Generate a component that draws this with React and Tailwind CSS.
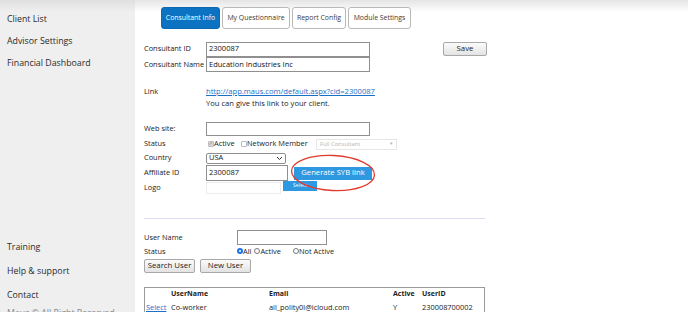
import React from "react";

const font = { fontFamily: '"Open Sans", "Liberation Sans", sans-serif' };

function Tab({ children, active, w }) {
  return (
    <div
      className={
        "h-[22px] flex items-center justify-center rounded-[3px] border text-[6.9px] whitespace-nowrap " +
        w +
        " " +
        (active
          ? "bg-[#0b73c2] border-[#0b6ab3] text-white"
          : "bg-white border-[#b9b9b9] text-[#3a3a3a]")
      }
    >
      {children}
    </div>
  );
}

function Input({ w, h = "h-[15px]", value, light }) {
  return (
    <div
      className={
        "border flex items-center px-[2px] text-[7.5px] text-[#111] bg-white whitespace-nowrap " +
        w +
        " " +
        h +
        " " +
        (light ? "border-[#ececec]" : "border-[#8f8f8f]")
      }
    >
      {value}
    </div>
  );
}

function GrayBtn({ children, w }) {
  return (
    <div
      className={
        "h-[14px] flex items-center justify-center border border-[#a8a8a8] rounded-[2px] bg-gradient-to-b from-[#fbfbfb] to-[#e3e3e3] text-[7.8px] text-[#222] whitespace-nowrap " +
        w
      }
    >
      {children}
    </div>
  );
}

export default function App() {
  return (
    <div className="relative w-[688px] h-[312px] overflow-hidden bg-white flex" style={font}>
      {/* top shadow */}
      <div className="absolute left-0 top-0 w-full h-[12px] bg-gradient-to-b from-[#d9d9d9] to-transparent opacity-70 pointer-events-none" />

      {/* Sidebar */}
      <div className="w-[135px] shrink-0 bg-[#efefef] flex flex-col text-[8.8px] text-[#2b2b2b] pl-[7px] whitespace-nowrap">
        <div className="shrink-0 mt-[9px] h-[22px] flex items-center">Client List</div>
        <div className="shrink-0 h-[22px] flex items-center">Advisor Settings</div>
        <div className="shrink-0 h-[22px] flex items-center">Financial Dashboard</div>
        <div className="shrink-0 mt-[161px] h-[24px] flex items-center">Training</div>
        <div className="shrink-0 h-[24px] flex items-center">Help &amp; support</div>
        <div className="shrink-0 h-[24px] flex items-center">Contact</div>
        <div className="shrink-0 h-[12px] flex items-center text-[#8a8a8a]">Maus © All Right Reserved</div>
      </div>

      {/* Main */}
      <div className="relative flex-1 pl-[9px] text-[7.4px] text-[#222] whitespace-nowrap">
        {/* tabs */}
        <div className="flex gap-[2px] pt-[7px] pl-[17px]">
          <Tab active w="w-[59px]">Consultant Info</Tab>
          <Tab w="w-[68px]">My Questionnaire</Tab>
          <Tab w="w-[54px]">Report Config</Tab>
          <Tab w="w-[63px]">Module Settings</Tab>
        </div>

        {/* form */}
        <div className="mt-[12px] flex flex-col">
          <div className="flex items-center h-[16px]">
            <div className="w-[62px]">Consultant ID</div>
            <Input w="w-[164px]" value="2300087" />
            <div className="ml-[73px]">
              <GrayBtn w="w-[44px]">Save</GrayBtn>
            </div>
          </div>
          <div className="flex items-center h-[15px]">
            <div className="w-[62px]">Consultant Name</div>
            <Input w="w-[164px]" value="Education Industries Inc" />
          </div>

          <div className="mt-[14px] flex items-center h-[12px] text-[7.6px]">
            <div className="w-[62px] text-[7.4px]">Link</div>
            <div className="text-[#1a6fc7] underline">http://app.maus.com/default.aspx?cid=2300087</div>
          </div>
          <div className="flex items-center h-[12px] text-[7.6px]">
            <div className="w-[62px]" />
            <div>You can give this link to your client.</div>
          </div>

          <div className="mt-[11px] flex items-center h-[15px]">
            <div className="w-[62px]">Web site:</div>
            <Input w="w-[164px]" h="h-[14px]" />
          </div>

          <div className="mt-[1px] flex items-center h-[14px]">
            <div className="w-[64px]">Status</div>
            <div className="w-[33px] flex items-center">
              <span className="w-[6px] h-[6px] border border-[#bdbdbd] bg-[#d6d6d6] rounded-[1px] flex items-center justify-center text-[5px] text-[#8a8a8a] leading-none">✓</span>
              <span>Active</span>
            </div>
            <div className="w-[75px] flex items-center">
              <span className="w-[6px] h-[6px] border border-[#bdbdbd] bg-white rounded-[1px]" />
              <span>Network Member</span>
            </div>
            <div className="w-[81px] h-[11px] border border-[#e6e6e6] flex items-center justify-between px-[3px] text-[5.8px] text-[#b4b4b4]">
              <span>Full Consultant</span>
              <span className="text-[5px]">▾</span>
            </div>
          </div>

          <div className="flex items-center h-[14px]">
            <div className="w-[62px]">Country</div>
            <div className="w-[80px] h-[11px] border border-[#8f8f8f] rounded-[2px] flex items-center justify-between px-[2px] text-[7.5px]">
              <span>USA</span>
              <svg width="7" height="5" viewBox="0 0 7 5"><path d="M1 1l2.5 2.5L6 1" stroke="#333" strokeWidth="1" fill="none" /></svg>
            </div>
          </div>

          <div className="flex items-center h-[16px]">
            <div className="w-[62px]">Affiliate ID</div>
            <Input w="w-[82px]" h="h-[16px]" value="2300087" />
            <div className="ml-[6px] w-[78px] h-[13px] bg-[#2e98e0] text-white text-[7.7px] flex items-center justify-center">
              Generate SYB link
            </div>
          </div>

          <div className="flex items-center h-[13px]">
            <div className="w-[62px]">Logo</div>
            <Input w="w-[75px]" h="h-[12px]" light />
            <div className="ml-[2px] w-[34px] h-[10px] bg-[#2e98e0] text-white text-[5px] flex items-center justify-center self-start">
              Select
            </div>
          </div>
        </div>

        {/* hr */}
        <div className="mt-[24px] w-[341px] h-[1px] bg-[#dcdcf4]" />

        {/* user search */}
        <div className="mt-[11px] flex flex-col">
          <div className="flex items-center h-[15px]">
            <div className="w-[93px]">User Name</div>
            <Input w="w-[90px]" h="h-[15px]" />
          </div>
          <div className="flex items-center h-[13px]">
            <div className="w-[93px]">Status</div>
            <div className="flex items-center">
              <span className="w-[6px] h-[6px] rounded-full bg-[#1a73e8] flex items-center justify-center">
                <span className="w-[2px] h-[2px] rounded-full bg-white" />
              </span>
              <span>All</span>
              <span className="ml-[3px] w-[6px] h-[6px] rounded-full border border-[#777]" />
              <span>Active</span>
              <span className="ml-[12px] w-[6px] h-[6px] rounded-full border border-[#777]" />
              <span>Not Active</span>
            </div>
          </div>
          <div className="flex items-center gap-[5px] mt-[1px]">
            <GrayBtn w="w-[51px]">Search User</GrayBtn>
            <GrayBtn w="w-[51px]">New User</GrayBtn>
          </div>
        </div>

        {/* table */}
        <div className="mt-[14px] w-[341px] border border-[#9a9a9a] border-b-0 text-[7.4px]">
          <div className="flex h-[13px] items-center font-bold text-[#222] text-[7px]">
            <div className="w-[26px]" />
            <div className="w-[98px]">UserName</div>
            <div className="w-[124px]">Email</div>
            <div className="w-[29px]">Active</div>
            <div>UserID</div>
          </div>
          <div className="flex h-[13px] items-center">
            <div className="w-[26px] pl-[1px] text-[#1a6fc7] underline">Select</div>
            <div className="w-[98px]">Co-worker</div>
            <div className="w-[124px]">ail_polity0l@icloud.com</div>
            <div className="w-[29px]">Y</div>
            <div>230008700002</div>
          </div>
        </div>

        {/* red ellipse annotation */}
        <svg className="absolute left-[154px] top-[153px] pointer-events-none" width="90" height="42" viewBox="0 0 90 42">
          <ellipse cx="44" cy="20" rx="41.5" ry="17.5" transform="rotate(3 44 20)" fill="none" stroke="#e23b2e" strokeWidth="1.3" />
        </svg>
      </div>
    </div>
  );
}
